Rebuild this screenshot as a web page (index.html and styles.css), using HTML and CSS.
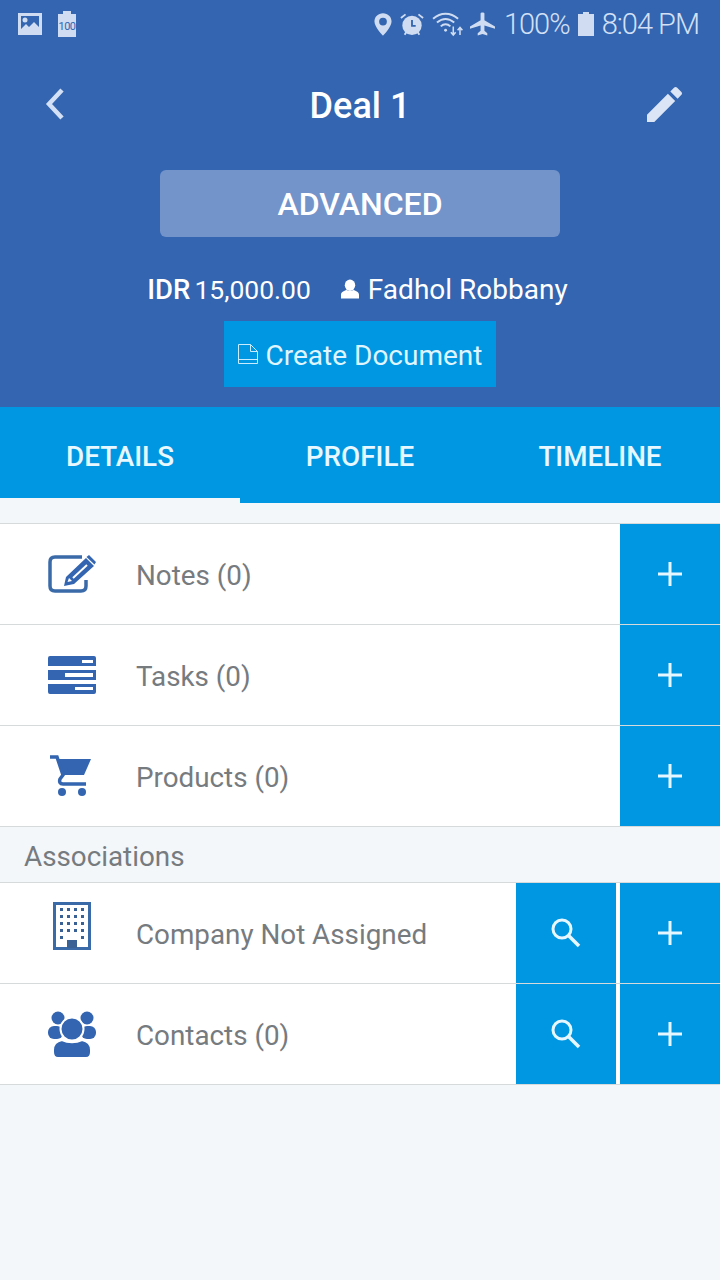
FILE: index.html
```html
<!DOCTYPE html>
<html lang="en">
  <head>
    <meta charset="UTF-8" />
    <meta name="viewport" content="width=device-width, initial-scale=1.0" />
    <title>Deal 1</title>
    <link rel="stylesheet" href="styles.css">
  </head>

  <body>
    <header class="header">
      <div class="status-bar">
        <div class="status-left">
          <svg class="st-icon" width="24" height="22" viewBox="0 0 24 22"><path fill-rule="evenodd" d="M0 0h24v22H0z M3 3v13l5-5 3 3 5-5 5 5V3z" fill="#cfdcf2"/><circle cx="7" cy="7" r="2.5" fill="#cfdcf2"/></svg>
          <div class="batt-100">100</div>
        </div>
        <div class="status-right">
          <svg width="18" height="25" viewBox="0 0 20 25"><path fill-rule="evenodd" d="M10 0C4.500 0 .5 4 .5 9.300.5 15.500 10 25 10 25s9.500-9.500 9.500-15.700C19.500 4 15.500 0 10 0zm0 5a4.300 4.300 0 1 1 0 8.600A4.300 4.300 0 0 1 10 5z" fill="#cfdcf2"/></svg>
          <svg width="24" height="25" viewBox="0 0 26 26"><circle cx="13" cy="14" r="10.500" fill="#cfdcf2"/><path d="M13 8v6.500h4" fill="none" stroke="#3365b0" stroke-width="2"/><path d="M1 6l5-4M25 6l-5-4M5 24l2-3M21 24l-2-3" stroke="#cfdcf2" stroke-width="2"/></svg>
          <svg width="31" height="25" viewBox="0 0 32 26" fill="none" stroke="#cfdcf2" stroke-width="2"><path d="M1 7c8-7 18-7 26 0M5 11c6-5 12-5 18 0M9 15c3-3 7-3 10 0"/><circle cx="14" cy="19" r="1.500" fill="#cfdcf2" stroke="none"/><path d="M22 15v9M19.500 21l2.500 3 2.500-3M29 24v-8M26.500 19l2.500-3 2.500 3" stroke-width="1.600"/></svg>
          <svg class="plane" width="25" height="24" viewBox="0 0 26 24"><path d="M11 1c0-1.300 4-1.300 4 0v7l11 6.500V17l-11-3.500V19l3 2.500V24l-5-1.500L8 24v-2.500l3-2.500v-5.500L0 17v-2.500L11 8z" fill="#cfdcf2"/></svg>
          <span class="st-text">100%</span>
          <svg width="16" height="24" viewBox="0 0 16 24"><path d="M5 0h6v2h5v22H0V2h5z" fill="#cfdcf2"/></svg>
          <span class="st-text">8:04 PM</span>
        </div>
      </div>

      <div class="toolbar">
        <div class="side">
          <svg class="back" width="22" height="34" viewBox="0 0 22 34"><path d="M18 3L5 17l13 14" fill="none" stroke="#d3e0f6" stroke-width="4.500"/></svg>
        </div>
        <h1 class="title">Deal 1</h1>
        <div class="side side-right">
          <svg width="35" height="35" viewBox="0 0 36 36"><path d="M0 36v-7.500L21.500 7l7.500 7.500L7.500 36zM24 4.500L28 .6c.8-.8 2-.8 2.800 0l4.600 4.600c.8.8.8 2 0 2.800L31.500 12z" fill="#dbe5f6"/></svg>
        </div>
      </div>

      <div class="stage">ADVANCED</div>

      <div class="meta">
        <span class="amount"><b>IDR</b><span>15,000.00</span></span>
        <span class="owner">
          <svg width="18" height="20" viewBox="0 0 19 20"><ellipse cx="9.500" cy="6" rx="5.500" ry="6" fill="#fff"/><path d="M0 20v-4c0-3 3-4 6-5 2 1.500 5 1.500 7 0 3 1 6 2 6 5v4z" fill="#fff"/></svg>
          Fadhol Robbany
        </span>
      </div>

      <button class="create-doc">
        <svg width="20" height="20" viewBox="0 0 20 20" fill="none" stroke="#c9ecff" stroke-width="1"><path d="M.5 19.500V.5h12l7 7v12zM12.500.5v7h7M.5 15.500h19"/></svg>
        <span class="create-text">Create Document</span>
      </button>
    </header>

    <nav class="tabs">
      <div class="tab tab-active">DETAILS</div>
      <div class="tab">PROFILE</div>
      <div class="tab">TIMELINE</div>
    </nav>

    <section class="list list-first">
      <div class="row">
        <svg class="row-icon" width="48" height="38" viewBox="0 0 48 38">
          <path d="M34 2H7C3.500 2 2 3.500 2 7v24c0 3.500 1.500 5 5 5h26c3.500 0 5-1.500 5-5v-6" fill="none" stroke="#3a6aa8" stroke-width="3.500"/>
          <path d="M16 31l2-9L38 3l8 8-20 18zM41 0l7 7-1.500 2.500-8-7.500z" fill="#3365b0"/>
          <path d="M25 23l14-13" stroke="#fff" stroke-width="2"/>
          <path d="M19.500 27l1.500-4 3 3z" fill="#fff"/>
        </svg>
        <span class="row-label">Notes (0)</span>
        <div class="btn-plus"><svg width="26" height="26" viewBox="0 0 26 26"><path d="M13 1v24M1 13h24" stroke="#e6f7ff" stroke-width="3"/></svg></div>
      </div>
      <div class="row">
        <svg class="row-icon" width="48" height="38" viewBox="0 0 48 38">
          <path d="M2 0h44a2 2 0 0 1 2 2v8H0V2a2 2 0 0 1 2-2zM0 14h48v10H0zM0 28h48v8a2 2 0 0 1-2 2H2a2 2 0 0 1-2-2z" fill="#3365b0"/>
          <path d="M34 4h11v3H34zM17 17h28v4H17zM27 31h18v3H27z" fill="#fff"/>
        </svg>
        <span class="row-label">Tasks (0)</span>
        <div class="btn-plus"><svg width="26" height="26" viewBox="0 0 26 26"><path d="M13 1v24M1 13h24" stroke="#e6f7ff" stroke-width="3"/></svg></div>
      </div>
      <div class="row">
        <svg class="row-icon" width="48" height="44" viewBox="0 0 48 44">
          <path d="M9 5h34l-7 16H15z" fill="#3365b0"/>
          <path d="M2 3h7l6 18-3 4c-1 3 0 5 3 5h23" fill="none" stroke="#3365b0" stroke-width="3.500"/>
          <circle cx="14" cy="38" r="4" fill="#3365b0"/><circle cx="34" cy="38" r="4" fill="#3365b0"/>
        </svg>
        <span class="row-label">Products (0)</span>
        <div class="btn-plus"><svg width="26" height="26" viewBox="0 0 26 26"><path d="M13 1v24M1 13h24" stroke="#e6f7ff" stroke-width="3"/></svg></div>
      </div>
    </section>

    <div class="section-title">Associations</div>

    <section class="list">
      <div class="row">
        <svg class="row-icon icon-building" width="48" height="48" viewBox="0 0 48 48">
          <path d="M6.500 1.500h35v45h-35z" fill="none" stroke="#3a6aa8" stroke-width="3"/>
          <path d="M12 6h3v3h-3zM19 6h3v3h-3zM26 6h3v3h-3zM33 6h3v3h-3zM12 13h3v3h-3zM19 13h3v3h-3zM26 13h3v3h-3zM33 13h3v3h-3zM12 20h3v3h-3zM19 20h3v3h-3zM26 20h3v3h-3zM33 20h3v3h-3zM12 27h3v3h-3zM19 27h3v3h-3zM26 27h3v3h-3zM33 27h3v3h-3zM12 34h3v3h-3zM33 34h3v3h-3zM19 38h10v8H19z" fill="#3a6196"/>
        </svg>
        <span class="row-label">Company Not Assigned</span>
        <div class="btn-search"><svg width="32" height="32" viewBox="0 0 32 32" fill="none" stroke="#e6f7ff" stroke-width="3"><circle cx="12" cy="12" r="9"/><path d="M18.500 18.500L29 29" stroke-width="3.500"/></svg></div>
        <div class="btn-plus"><svg width="26" height="26" viewBox="0 0 26 26"><path d="M13 1v24M1 13h24" stroke="#e6f7ff" stroke-width="3"/></svg></div>
      </div>
      <div class="row">
        <svg class="row-icon icon-people" width="48" height="48" viewBox="0 0 48 48">
          <g fill="#3365b0">
            <circle cx="10" cy="9" r="6.500"/><circle cx="39" cy="9" r="6.500"/>
            <rect x="0" y="17" width="15" height="13" rx="6"/><rect x="33" y="17" width="15" height="13" rx="6"/>
            <g stroke="#fff" stroke-width="2">
              <circle cx="24" cy="20" r="11.500"/>
              <path d="M5 43v-2c0-6 4-9 9-10 6 3 14 3 20 0 5 1 9 4 9 10v2c0 4-2 6-5 6H10c-3 0-5-2-5-6z"/>
            </g>
          </g>
        </svg>
        <span class="row-label">Contacts (0)</span>
        <div class="btn-search"><svg width="32" height="32" viewBox="0 0 32 32" fill="none" stroke="#e6f7ff" stroke-width="3"><circle cx="12" cy="12" r="9"/><path d="M18.500 18.500L29 29" stroke-width="3.500"/></svg></div>
        <div class="btn-plus"><svg width="26" height="26" viewBox="0 0 26 26"><path d="M13 1v24M1 13h24" stroke="#e6f7ff" stroke-width="3"/></svg></div>
      </div>
    </section>
  </body>
</html>
```

FILE: styles.css
```css
* {
  box-sizing: border-box;
}

body {
  margin: 0;
  height: 1280px;
  overflow: hidden;
  background-color: #f3f7fa;
  font-family: Roboto, "Liberation Sans", sans-serif;
}

.header {
  height: 407px;
  background-color: #3365b0;
  display: flex;
  flex-direction: column;
  align-items: center;
}

.status-bar {
  width: 100%;
  height: 48px;
  padding: 0 21px 0 18px;
  display: flex;
  justify-content: space-between;
  align-items: center;
}

.status-left {
  display: flex;
  align-items: center;
  gap: 16px;
}

.batt-100 {
  width: 18px;
  height: 23px;
  margin-top: 3px;
  background-color: #cfdcf2;
  color: #3365b0;
  font-size: 11px;
  line-height: 25px;
  text-align: center;
  letter-spacing: -0.5px;
  position: relative;
}

.batt-100::before {
  content: "";
  position: absolute;
  top: -3px;
  left: 5px;
  width: 8px;
  height: 3px;
  background-color: #cfdcf2;
}

.status-right {
  display: flex;
  align-items: center;
  gap: 8px;
}

.plane {
  margin-left: -1px;
  margin-right: 1px;
}

.st-text {
  color: #d3e0f6;
  font-size: 29px;
  font-weight: 300;
  letter-spacing: -1px;
}

.toolbar {
  width: 100%;
  height: 112px;
  padding: 0 38px;
  display: flex;
  align-items: center;
}

.side {
  width: 100px;
  padding-left: 6px;
  display: flex;
}

.side-right {
  padding-left: 0;
  justify-content: flex-end;
}

.title {
  flex: 1;
  margin: 4px 0 0;
  color: #fff;
  font-size: 36px;
  font-weight: 500;
  text-align: center;
}

.stage {
  width: 400px;
  height: 67px;
  flex-shrink: 0;
  margin-top: 10px;
  background-color: #7393cb;
  border-radius: 6px;
  color: #fff;
  font-size: 32px;
  font-weight: 500;
  line-height: 69px;
  text-align: center;
}

.meta {
  height: 84px;
  padding-top: 20px;
  margin-right: 5px;
  flex-shrink: 0;
  display: flex;
  align-items: center;
  gap: 30px;
  color: #fff;
  font-size: 28px;
}

.amount {
  display: flex;
  align-items: center;
  gap: 4px;
  font-size: 26.5px;
}

.amount b {
  font-size: 27.5px;
  font-weight: 500;
}

.owner {
  display: flex;
  align-items: center;
  gap: 9px;
}

.create-doc {
  width: 272px;
  height: 66px;
  flex-shrink: 0;
  background-color: #0097e2;
  color: #dff5ff;
  border: none;
  padding: 0;
  font-family: inherit;
  font-size: 28px;
  display: flex;
  justify-content: center;
  align-items: center;
  gap: 8px;
}

.create-text {
  padding-top: 2px;
}

.tabs {
  height: 96px;
  background-color: #0097e2;
  display: flex;
}

.tab {
  flex: 1;
  color: #e8f8ff;
  font-size: 27.8px;
  font-weight: 500;
  line-height: 100px;
  text-align: center;
}

.tab-active {
  height: 91px;
  background-color: #0097e2;
  box-shadow: 0 5px 0 #f3f7fa;
}

.list-first {
  margin-top: 20px;
}

.row {
  height: 101px;
  background-color: #fff;
  border-top: 1px solid #d6dadb;
  display: flex;
  align-items: center;
}

.list .row:last-child {
  height: 102px;
  border-bottom: 1px solid #d6dadb;
}

.row-icon {
  margin-left: 48px;
  flex-shrink: 0;
}

.icon-building {
  margin-bottom: 14px;
}

.icon-people {
  margin-bottom: 2px;
}

.row-label {
  margin-left: 40px;
  padding-top: 2px;
  flex: 1;
  color: #767b80;
  font-size: 27.8px;
}

.btn-plus,
.btn-search {
  width: 100px;
  height: 100px;
  background-color: #0097e2;
  display: flex;
  justify-content: center;
  align-items: center;
}

.btn-search {
  margin-right: 4px;
}

.section-title {
  height: 55px;
  padding-left: 24px;
  color: #767b80;
  font-size: 27.8px;
  line-height: 60px;
}
```
